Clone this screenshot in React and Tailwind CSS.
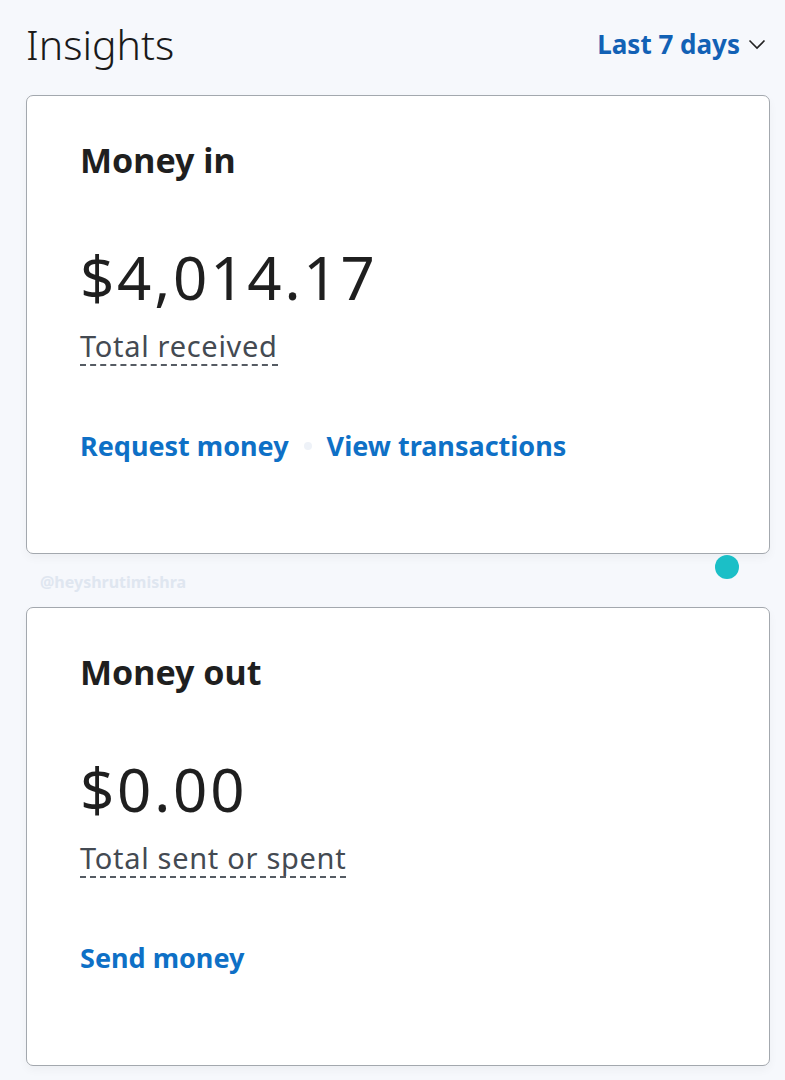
export default function App() {
  const font = { fontFamily: '"Noto Sans", "Open Sans", sans-serif' };
  return (
    <div className="min-h-[1080px] w-[785px] bg-[#f6f8fc] pl-[26px] pr-[15px]" style={font}>
      <div className="flex h-[95px] items-start justify-between">
        <h1 className="mt-[16px] text-[41px] font-light leading-[56px] text-[#1a1a1a]">Insights</h1>
        <button className="mr-[4px] mt-[24px] flex items-center gap-[8px] text-[26px] font-bold leading-[40px] text-[#1261b5]">
          Last 7 days
          <svg width="18" height="12" viewBox="0 0 18 12" fill="none" stroke="#222" strokeWidth="1.6">
            <path d="M1.5 2.5 9 10 16.5 2.5" />
          </svg>
        </button>
      </div>

      <Card
        title="Money in"
        amount="$4,014.17"
        label="Total received"
        links={["Request money", "View transactions"]}
      />

      <div className="relative h-[53px]">
        <span className="absolute left-[14px] top-[16px] text-[16px] font-bold text-[#dfe6f0]">@heyshrutimishra</span>
        <span className="absolute left-[689px] top-[1px] h-[24px] w-[24px] rounded-full bg-[#1bbfc7]" />
      </div>

      <Card
        title="Money out"
        amount="$0.00"
        label="Total sent or spent"
        links={["Send money"]}
      />
    </div>
  );
}

function Card({ title, amount, label, links }) {
  return (
    <div className="h-[459px] w-[744px] rounded-[7px] border border-[#a3a8ae] bg-white pl-[53px] pt-[39px] shadow-[0_4px_10px_rgba(0,0,0,0.04)]">
      <h2 className="text-[34px] font-bold leading-[50px] text-[#1f1f1f]">{title}</h2>
      <div className="mt-[54px] text-[60px] font-normal leading-[76px] tracking-[2.8px] text-[#1f1f1f]">{amount}</div>
      <div className="mt-[13px] inline-block border-b-2 border-dashed border-[#555b63] text-[29px] leading-[36px] tracking-[0.7px] text-[#444a52]">
        {label}
      </div>
      <div className="mt-[60px] flex items-center text-[27px] font-bold leading-[40px] text-[#0e70c6]">
        {links.map((l, i) => (
          <span key={l} className="flex items-center">
            {i > 0 && <span className="mx-[15px] h-[8px] w-[8px] rounded-full bg-[#eef2f8]" />}
            {l}
          </span>
        ))}
      </div>
    </div>
  );
}
